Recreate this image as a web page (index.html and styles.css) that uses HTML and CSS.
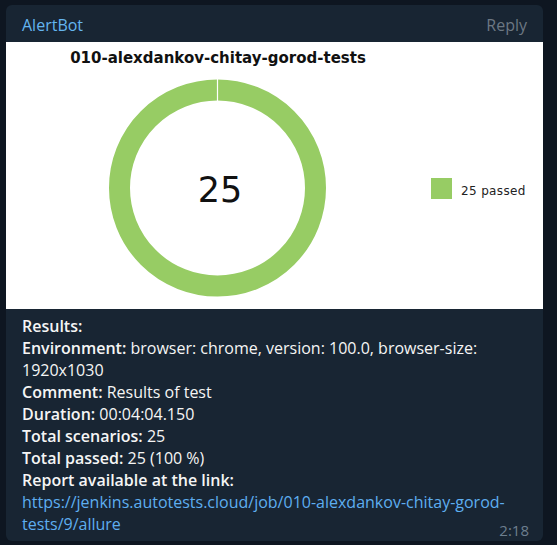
FILE: index.html
```html
<!DOCTYPE html>
<html>
<head>
<meta charset="utf-8">
<link rel="stylesheet" href="styles.css">
</head>
<body>
<div class="bubble">
  <div class="header">
    <span class="author">AlertBot</span>
    <span class="reply">Reply</span>
  </div>
  <div class="chart">
    <svg width="537" height="267" viewBox="0 0 537 267" xmlns="http://www.w3.org/2000/svg">
      <text x="212" y="20.5" text-anchor="middle" class="chart-title">010-alexdankov-chitay-gorod-tests</text>
      <circle cx="211.5" cy="146" r="98" fill="none" stroke="#97cc64" stroke-width="21"/>
      <line x1="211.5" y1="37" x2="211.5" y2="59" stroke="#ffffff" stroke-width="1.2"/>
      <text x="214" y="159.5" text-anchor="middle" class="chart-total">25</text>
      <rect x="425" y="136" width="21" height="21" fill="#97cc64"/>
      <text x="455" y="153" class="chart-legend">25 passed</text>
    </svg>
  </div>
  <div class="text">
    <div><b>Results:</b></div>
    <div><b>Environment:</b> browser: chrome, version: 100.0, browser-size: 1920x1030</div>
    <div><b>Comment:</b> Results of test</div>
    <div><b>Duration:</b> 00:04:04.150</div>
    <div><b>Total scenarios:</b> 25</div>
    <div><b>Total passed:</b> 25 (100 %)</div>
    <div><b>Report available at the link:</b></div>
    <div class="last"><a class="link" href="#">https://jenkins.autotests.cloud/job/010-alexdankov-chitay-gorod-tests/9/allure</a><span class="time">2:18</span></div>
  </div>
</div>
</body>
</html>
```

FILE: styles.css
```css
html, body {
  margin: 0;
  padding: 0;
  background: #0e1621;
  height: 100%;
  overflow: hidden;
}
body {
  padding: 5px 0 0 6px;
  box-sizing: border-box;
  font-family: "Open Sans", "DejaVu Sans", sans-serif;
}
.bubble {
  width: 537px;
  background: #182533;
  border-radius: 6px;
  padding-bottom: 6px;
}
.header {
  display: flex;
  justify-content: space-between;
  align-items: center;
  height: 37px;
  padding: 2px 16px 0 16px;
  box-sizing: border-box;
  font-size: 16px;
}
.author {
  color: #64b5ef;
}
.reply {
  color: #6c7883;
}
.chart {
  background: #ffffff;
  height: 267px;
}
.chart svg {
  display: block;
}
.chart-title {
  font-family: "DejaVu Sans", sans-serif;
  font-weight: bold;
  font-size: 15px;
  fill: #111;
}
.chart-total {
  font-family: "DejaVu Sans", sans-serif;
  font-size: 35px;
  fill: #111;
}
.chart-legend {
  font-family: "DejaVu Sans", sans-serif;
  font-size: 12px;
  letter-spacing: 0.35px;
  fill: #222;
}
.text {
  padding: 6px 14px 0 16px;
  color: #f5f5f5;
  font-size: 16px;
  line-height: 22px;
}
.text b {
  font-weight: 600;
}
.link {
  color: #5eaef0;
  text-decoration: none;
}
.time {
  float: right;
  color: #6d7f8f;
  font-size: 15px;
  margin-top: 6px;
}
```
